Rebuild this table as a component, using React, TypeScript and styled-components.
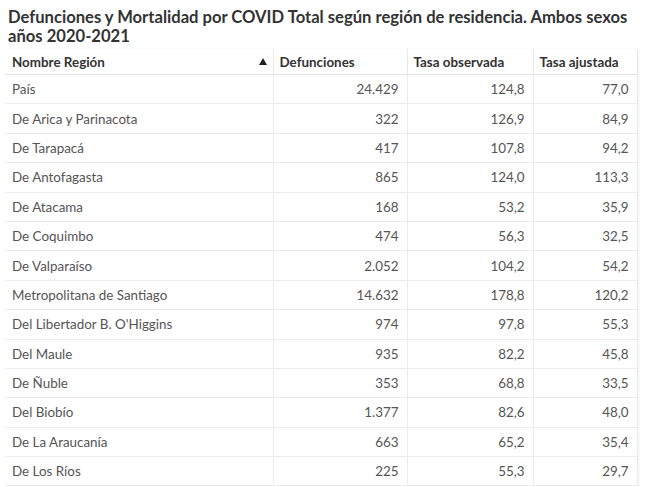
import React from "react";
import styled, { createGlobalStyle } from "styled-components";

const Global = createGlobalStyle`
  html, body { margin: 0; padding: 0; background: #fff; }
  body { font-family: Lato, "Noto Sans", sans-serif; }
`;

const Page = styled.div`
  width: 650px;
  padding: 8px 0 0 5px;
  box-sizing: border-box;
`;

const Title = styled.h1`
  margin: 0 0 3px 3px;
  font-size: 16.6px;
  line-height: 19px;
  font-weight: 700;
  color: #333;
  width: 636px;
`;

const Table = styled.table`
  border-collapse: collapse;
  width: 632px;
  table-layout: fixed;
  font-size: 13.4px;
  color: #555;
  box-shadow: 1px 0 2px rgba(0, 0, 0, 0.06);
`;

const Col = styled.col<{ $w: number }>`
  width: ${(p) => p.$w}px;
`;

const Th = styled.th`
  height: 25px;
  padding: 0 6px;
  text-align: left;
  font-weight: 700;
  color: #333;
  border-bottom: 1px solid #e4e4e4;
  border-right: 1px solid #e8e8e8;
  white-space: nowrap;
  overflow: hidden;
`;

const HeadInner = styled.div`
  display: flex;
  align-items: center;
  justify-content: space-between;
  padding-left: 1px;
`;

const SortArrow = styled.span`
  width: 0;
  height: 0;
  border-left: 4px solid transparent;
  border-right: 4px solid transparent;
  border-bottom: 7px solid #222;
`;

const Td = styled.td<{ $num?: boolean }>`
  height: 28.4px;
  padding: 0 ${(p) => (p.$num ? "8px" : "6px")} 0 ${(p) => (p.$num ? "6px" : "7px")};
  text-align: ${(p) => (p.$num ? "right" : "left")};
  border-bottom: 1px solid #ececec;
  border-right: 1px solid #ececec;
  white-space: nowrap;
  overflow: hidden;
`;

const rows: [string, string, string, string][] = [
  ["País", "24.429", "124,8", "77,0"],
  ["De Arica y Parinacota", "322", "126,9", "84,9"],
  ["De Tarapacá", "417", "107,8", "94,2"],
  ["De Antofagasta", "865", "124,0", "113,3"],
  ["De Atacama", "168", "53,2", "35,9"],
  ["De Coquimbo", "474", "56,3", "32,5"],
  ["De Valparaíso", "2.052", "104,2", "54,2"],
  ["Metropolitana de Santiago", "14.632", "178,8", "120,2"],
  ["Del Libertador B. O'Higgins", "974", "97,8", "55,3"],
  ["Del Maule", "935", "82,2", "45,8"],
  ["De Ñuble", "353", "68,8", "33,5"],
  ["Del Biobío", "1.377", "82,6", "48,0"],
  ["De La Araucanía", "663", "65,2", "35,4"],
  ["De Los Ríos", "225", "55,3", "29,7"],
];

export default function App() {
  return (
    <>
      <Global />
      <Page>
        <Title>
          Defunciones y Mortalidad por COVID Total según región de residencia. Ambos sexos años 2020-2021
        </Title>
        <Table>
          <colgroup>
            <Col $w={268} />
            <Col $w={134} />
            <Col $w={126} />
            <Col $w={104} />
          </colgroup>
          <thead>
            <tr>
              <Th>
                <HeadInner>
                  <span>Nombre Región</span>
                  <SortArrow />
                </HeadInner>
              </Th>
              <Th>Defunciones</Th>
              <Th>Tasa observada</Th>
              <Th>Tasa ajustada</Th>
            </tr>
          </thead>
          <tbody>
            {rows.map((r) => (
              <tr key={r[0]}>
                <Td>{r[0]}</Td>
                <Td $num>{r[1]}</Td>
                <Td $num>{r[2]}</Td>
                <Td $num>{r[3]}</Td>
              </tr>
            ))}
          </tbody>
        </Table>
      </Page>
    </>
  );
}
